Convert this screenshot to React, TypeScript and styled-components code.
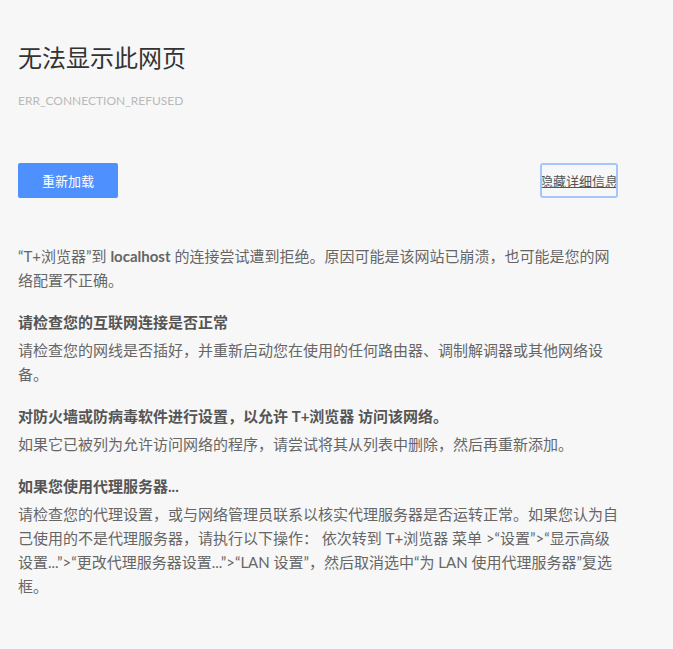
import React from "react";
import styled, { createGlobalStyle } from "styled-components";

const GlobalStyle = createGlobalStyle`
  html, body {
    margin: 0;
    padding: 0;
    background: #f7f7f7;
  }
  body {
    font-family: Lato, "Noto Sans CJK SC", sans-serif;
    color: #646464;
  }
`;

const Page = styled.div`
  min-height: 649px;
  padding: 42px 0 0 18px;
  box-sizing: border-box;
`;

const Wrapper = styled.div`
  width: 600px;
`;

const Title = styled.h1`
  margin: 0;
  font-size: 24px;
  line-height: 32px;
  font-weight: 400;
  color: #333;
`;

const ErrorCode = styled.div`
  margin-top: 19px;
  font-size: 12px;
  line-height: 16px;
  color: #b9b9b9;
`;

const ButtonRow = styled.div`
  display: flex;
  justify-content: space-between;
  align-items: center;
  margin-top: 54px;
`;

const ReloadButton = styled.button`
  width: 100px;
  height: 35px;
  border: none;
  border-radius: 2px;
  background: #4d90fe;
  color: #fff;
  font-family: inherit;
  font-size: 13px;
  cursor: pointer;
`;

const DetailsButton = styled.button`
  width: 78px;
  height: 35px;
  padding: 0;
  border: none;
  border-radius: 3px;
  outline: 2px solid #a6c6fb;
  outline-offset: -2px;
  background: transparent;
  color: #555;
  font-family: inherit;
  font-size: 13px;
  text-decoration: underline;
  white-space: nowrap;
  display: flex;
  justify-content: center;
  align-items: center;
`;

const Details = styled.div`
  margin-top: 46px;
`;

const Text = styled.p`
  margin: 0;
  font-size: 15px;
  line-height: 24px;
  color: #666;
`;

const Section = styled.div`
  margin-top: 18px;
`;

const Heading = styled.h2`
  margin: 0 0 4px;
  font-size: 15px;
  line-height: 24px;
  font-weight: 700;
  color: #555;
`;

const sections = [
  {
    title: "请检查您的互联网连接是否正常",
    text: "请检查您的网线是否插好，并重新启动您在使用的任何路由器、调制解调器或其他网络设备。",
  },
  {
    title: "对防火墙或防病毒软件进行设置，以允许 T+浏览器 访问该网络。",
    text: "如果它已被列为允许访问网络的程序，请尝试将其从列表中删除，然后再重新添加。",
  },
  {
    title: "如果您使用代理服务器...",
    text: "请检查您的代理设置，或与网络管理员联系以核实代理服务器是否运转正常。如果您认为自己使用的不是代理服务器，请执行以下操作： 依次转到 T+浏览器 菜单 >“设置”>“显示高级设置...”>“更改代理服务器设置...”>“LAN 设置”，然后取消选中“为 LAN 使用代理服务器”复选框。",
  },
];

export default function App() {
  return (
    <Page>
      <GlobalStyle />
      <Wrapper>
        <Title>无法显示此网页</Title>
        <ErrorCode>ERR_CONNECTION_REFUSED</ErrorCode>
        <ButtonRow>
          <ReloadButton>重新加载</ReloadButton>
          <DetailsButton>隐藏详细信息</DetailsButton>
        </ButtonRow>
        <Details>
          <Text>
            “T+浏览器”到 <strong>localhost</strong> 的连接尝试遭到拒绝。原因可能是该网站已崩溃，也可能是您的网络配置不正确。
          </Text>
          {sections.map(s => (
            <Section key={s.title}>
              <Heading>{s.title}</Heading>
              <Text>{s.text}</Text>
            </Section>
          ))}
        </Details>
      </Wrapper>
    </Page>
  );
}
